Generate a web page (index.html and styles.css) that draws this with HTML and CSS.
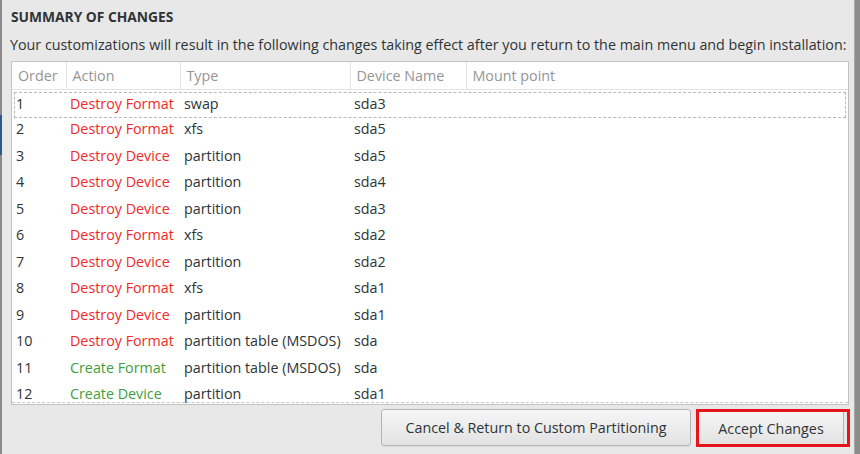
FILE: index.html
```html
<!DOCTYPE html>
<html>
<head>
<meta charset="utf-8">
<link rel="stylesheet" href="styles.css">
</head>
<body>
<div class="frame">
  <div class="edge-left"></div>
  <div class="dialog">
    <h1 class="title">SUMMARY OF CHANGES</h1>
    <p class="subtitle">Your customizations will result in the following changes taking effect after you return to the main menu and begin installation:</p>
    <div class="tablebox">
      <table class="changes">
        <colgroup>
          <col class="c-order"><col class="c-action"><col class="c-type"><col class="c-dev"><col class="c-mount">
        </colgroup>
        <thead>
          <tr><th>Order</th><th>Action</th><th>Type</th><th>Device Name</th><th>Mount point</th></tr>
        </thead>
        <tbody>
          <tr class="focus"><td>1</td><td class="destroy">Destroy Format</td><td>swap</td><td>sda3</td><td></td></tr>
          <tr><td>2</td><td class="destroy">Destroy Format</td><td>xfs</td><td>sda5</td><td></td></tr>
          <tr><td>3</td><td class="destroy">Destroy Device</td><td>partition</td><td>sda5</td><td></td></tr>
          <tr><td>4</td><td class="destroy">Destroy Device</td><td>partition</td><td>sda4</td><td></td></tr>
          <tr><td>5</td><td class="destroy">Destroy Device</td><td>partition</td><td>sda3</td><td></td></tr>
          <tr><td>6</td><td class="destroy">Destroy Format</td><td>xfs</td><td>sda2</td><td></td></tr>
          <tr><td>7</td><td class="destroy">Destroy Device</td><td>partition</td><td>sda2</td><td></td></tr>
          <tr><td>8</td><td class="destroy">Destroy Format</td><td>xfs</td><td>sda1</td><td></td></tr>
          <tr><td>9</td><td class="destroy">Destroy Device</td><td>partition</td><td>sda1</td><td></td></tr>
          <tr><td>10</td><td class="destroy">Destroy Format</td><td>partition table (MSDOS)</td><td>sda</td><td></td></tr>
          <tr><td>11</td><td class="create">Create Format</td><td>partition table (MSDOS)</td><td>sda</td><td></td></tr>
          <tr><td>12</td><td class="create">Create Device</td><td>partition</td><td>sda1</td><td></td></tr>
        </tbody>
      </table>
      <div class="scroll-edge"></div>
    </div>
    <div class="actions">
      <button class="btn">Cancel &amp; Return to Custom Partitioning</button>
      <div class="highlight"><button class="btn btn-accept">Accept Changes</button></div>
    </div>
  </div>
  <div class="edge-right"></div>
</div>
</body>
</html>
```

FILE: styles.css
```css
* { box-sizing: border-box; }
html, body { margin: 0; padding: 0; }
body {
  width: 860px;
  height: 454px;
  overflow: hidden;
  background: #e8e8e8;
  font-family: "Open Sans", "DejaVu Sans", sans-serif;
  color: #2e3436;
}
.frame {
  display: flex;
  height: 454px;
}
.edge-left {
  width: 2px;
  flex: none;
  background: linear-gradient(to bottom, #8a8a8a 0, #8a8a8a 115px, #2a5a8a 115px, #2a5a8a 155px, #8a8a8a 155px);
}
.edge-right {
  width: 6px;
  flex: none;
  border-left: 1px solid #a8a8a8;
  background: #8c8c8c;
}
.dialog {
  flex: 1;
  padding: 7px 3px 0 9px;
  display: flex;
  flex-direction: column;
}
.title {
  margin: 0;
  font-size: 13.8px;
  font-weight: bold;
  line-height: 20px;
  color: #2e3436;
}
.subtitle {
  margin: 7px 0 0 -1px;
  font-size: 14.3px;
  line-height: 22px;
  color: #2e3436;
  white-space: nowrap;
}
.tablebox {
  position: relative;
  margin-top: 5px;
  width: 838px;
  height: 344px;
  background: #fff;
  border: 1px solid #c4c4c4;
  overflow: hidden;
}
.changes {
  border-collapse: collapse;
  table-layout: fixed;
  width: 100%;
  font-size: 14.3px;
}
.c-order { width: 54px; }
.c-action { width: 114px; }
.c-type { width: 170px; }
.c-dev { width: 116px; }
.changes th {
  height: 27px;
  text-align: left;
  font-weight: normal;
  color: #959595;
  padding: 0 0 0 6px;
  border-left: 1px solid #e4e4e4;
  border-bottom: 1px solid #e4e4e4;
}
.changes th:first-child { border-left: none; }
.changes td {
  height: 26.5px;
  padding: 0 0 0 4px;
  color: #2e3436;
  white-space: nowrap;
}
.changes tbody tr:first-child td { padding-top: 2px; }
.changes .destroy { color: #ef2929; }
.changes .create { color: #3f9e3f; }
.focus td:first-child { position: relative; }
.focus td:first-child::after {
  content: "";
  position: absolute;
  left: 2px;
  top: 2px;
  width: 830px;
  height: 24px;
  border: 1px dashed #b8b8b8;
  pointer-events: none;
}
.scroll-edge {
  position: absolute;
  left: 0;
  right: 0;
  bottom: 1px;
  border-bottom: 1px dashed #c8c8c8;
}
.actions {
  display: flex;
  justify-content: flex-end;
  align-items: flex-start;
  gap: 5px;
  margin-top: 4px;
}
.btn {
  font-family: inherit;
  font-size: 14.3px;
  color: #2e3436;
  height: 37px;
  border: 1px solid #b4b4b4;
  border-radius: 3px;
  background: linear-gradient(to bottom, #f6f6f6, #e2e2e2);
  box-shadow: 0 1px 0 rgba(0,0,0,0.06);
  padding: 0;
}
.actions > .btn { width: 310px; }
.highlight {
  width: 154px;
  height: 38px;
  border: 3px solid #e8141c;
  margin-right: 1px;
  padding-right: 2px;
  overflow: hidden;
}
.btn-accept {
  width: 146px;
  height: 36px;
  margin-top: -2px;
  margin-left: -1px;
}
```
